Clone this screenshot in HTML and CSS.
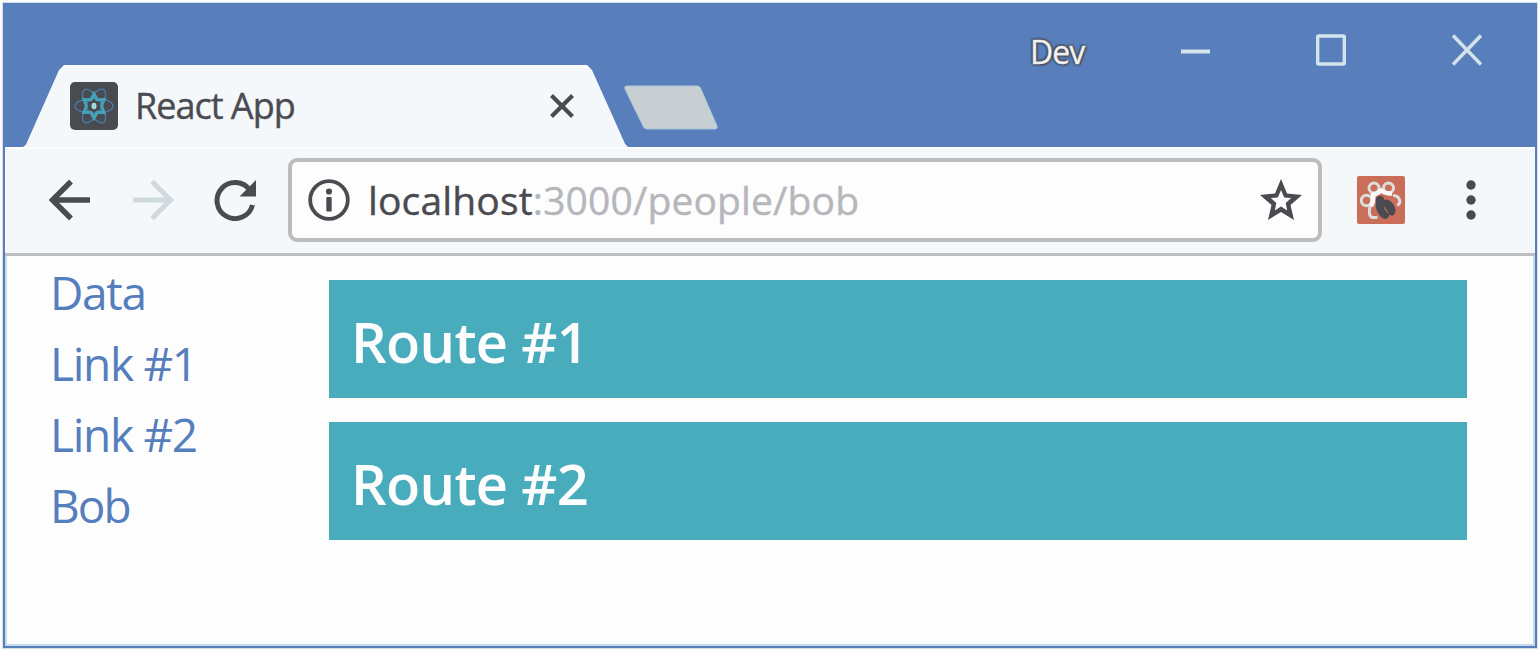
FILE: index.html
```html
<!DOCTYPE html>
<html lang="en">
<head>
<meta charset="utf-8">
<title>React App</title>
<link rel="stylesheet" href="styles.css">
</head>
<body>
<div class="window">
  <header class="titlebar">
    <div class="tab">
      <svg class="favicon" width="48" height="48" viewBox="0 0 48 48">
        <rect width="48" height="48" rx="5" fill="#4a4b51"/>
        <g fill="none" stroke="#467fa9" stroke-width="1.3">
          <ellipse cx="24" cy="24" rx="19" ry="7.5"/>
          <ellipse cx="24" cy="24" rx="19" ry="7.5" transform="rotate(60 24 24)"/>
          <ellipse cx="24" cy="24" rx="19" ry="7.5" transform="rotate(120 24 24)"/>
        </g>
        <path d="M24 12l3 6 7-.5-2.500 6.500 2.500 6.500-7-.5-3 6-3-6-7 .5 2.500-6.500-2.500-6.500 7 .5z" fill="none" stroke="#45a2b8" stroke-width="3"/>
        <circle cx="24" cy="24" r="5.6" fill="#4a4b51"/>
        <ellipse cx="24" cy="24" rx="2.5" ry="3.2" fill="#9edbe4"/>
      </svg>
      <span class="tab-title">React App</span>
      <svg class="tab-close" width="26" height="26" viewBox="0 0 26 26"><path d="M2.5 2.5l21 21M23.5 2.5l-21 21" stroke="#4a4b51" stroke-width="4.2"/></svg>
    </div>
    <svg class="new-tab" width="94" height="45" viewBox="0 0 94 45"><path d="M2.500 1H73Q75.500 1 76.500 3L93 41Q94 44 91 44H23Q20.500 44 19.500 42L1 4Q0 1 2.500 1z" fill="#c8cfd3" stroke="#a9c8da" stroke-width="1"/></svg>
    <div class="controls">
      <span class="profile">Dev</span>
      <svg class="minimize" width="30" height="32" viewBox="0 0 30 32"><path d="M0 17.500h29" stroke="#d6e5ec" stroke-width="4"/></svg>
      <svg class="maximize" width="30" height="32" viewBox="0 0 30 32"><rect x="1.700" y="2" width="26.600" height="28" rx="1" fill="none" stroke="#d3e5ec" stroke-width="3.400"/></svg>
      <svg class="close" width="30" height="32" viewBox="0 0 30 32"><path d="M1 1.500l28 29M29 1.500l-28 29" stroke="#d3e2ea" stroke-width="3.600"/></svg>
    </div>
  </header>
  <nav class="toolbar">
    <svg class="back" width="43" height="42" viewBox="0 0 43 42"><path d="M42 21H4M23 2.500L4.500 21 23 39.500" fill="none" stroke="#4a4b51" stroke-width="5.400"/></svg>
    <svg class="forward" width="43" height="42" viewBox="0 0 43 42"><path d="M1 21H39M20 2.500L38.500 21 20 39.500" fill="none" stroke="#d0dade" stroke-width="5"/></svg>
    <svg class="reload" width="43" height="42" viewBox="0 0 43 42"><path d="M36 11.500A18 18 0 1 0 38.500 26" fill="none" stroke="#4a4b51" stroke-width="5"/><path d="M42 1V17.500H25.500z" fill="#4a4b51"/></svg>
    <div class="address">
      <svg class="info" width="42" height="42" viewBox="0 0 42 42"><circle cx="21" cy="21" r="18.800" fill="none" stroke="#4a4b51" stroke-width="3.800"/><circle cx="21" cy="12.500" r="3.100" fill="#4a4b51"/><rect x="18.300" y="18" width="5.400" height="14.500" rx="1" fill="#4a4b51"/></svg>
      <span class="url"><span class="host">localhost</span><span class="path">:3000/people/bob</span></span>
      <svg class="star" width="44" height="42" viewBox="0 0 44 42"><path fill-rule="evenodd" d="M22 0l6 14.500L43 16 31.500 26 35 41 22 33 9 41 12.500 26 1 16l15-1.500zM22 11l-3.200 7.500-7 .5 5.500 5-1.500 7.500 6.200-4 6.200 4-1.500-7.500 5.500-5-7-.5z" fill="#4a4b51"/></svg>
    </div>
    <svg class="extension" width="48" height="48" viewBox="0 0 48 48">
      <rect width="48" height="48" rx="2" fill="#ca6e5a"/>
      <g fill="none" stroke="#dcdede" stroke-width="3">
        <circle cx="17" cy="12" r="5"/><circle cx="31.500" cy="12" r="5"/>
        <circle cx="9.500" cy="24.500" r="5.200"/>
        <path d="M36 19.500q6 0 7 6-.5 3-3 3.500M13.500 29c-2 6-1.500 12 2 12.500h5"/>
        <path d="M14 30Q17 25 16 19 20 18 24 14.500 29 18 35 17.500" stroke="#fafafa" stroke-width="4.500"/>
      </g>
      <g fill="#4a4b51"><circle cx="23" cy="24" r="4.300"/><ellipse cx="25.500" cy="33" rx="5.800" ry="10.500" transform="rotate(-24 25.500 33)"/><ellipse cx="32" cy="31.500" rx="5.400" ry="8.800" transform="rotate(-32 32 31.500)"/></g>
      <path d="M27 31l4 6" stroke="#ca6e5a" stroke-width="1.200"/>
    </svg>
    <svg class="menu" width="12" height="42" viewBox="0 0 12 42"><g fill="#4a4b51"><circle cx="6" cy="6" r="4.700"/><circle cx="6" cy="21" r="4.700"/><circle cx="6" cy="36" r="4.700"/></g></svg>
  </nav>
  <main class="page">
    <div class="links">
      <a class="link data">Data</a>
      <a class="link">Link #1</a>
      <a class="link">Link #2</a>
      <a class="link bob">Bob</a>
    </div>
    <div class="routes">
      <section class="route">Route #1</section>
      <section class="route">Route #2</section>
    </div>
  </main>
</div>
</body>
</html>
```
FILE: styles.css
```css
* { box-sizing: border-box; }
body {
  margin: 0;
  padding: 3px;
  background: #fdfdfd;
  font-family: "Open Sans", "Noto Sans", sans-serif;
}
svg { display: block; flex: none; }
.window {
  display: flex;
  flex-direction: column;
  width: 1534px;
  height: 645px;
  border: 2px solid #587ebb;
  border-top: 0;
  background: #fdfdfd;
  box-shadow: 0 0 0 1px #d3e0e8, inset 0 0 0 2px #c4dce7;
}
.titlebar {
  display: flex;
  align-items: flex-start;
  height: 144px;
  flex: none;
  background: #587ebb;
}
.tab {
  display: flex;
  align-items: center;
  width: 605px;
  height: 82px;
  margin: 62px 0 0 18px;
  padding-left: 47px;
  background: linear-gradient(#fdfdfd 3px, #f4f8fa 3px);
  clip-path: polygon(0 100%, 3px 97%, 36px 6%, 41px 0, 564px 0, 569px 6%, 602px 96%, 605px 100%);
}
.tab-title {
  width: 200px;
  margin-left: 17px;
  font-size: 36px;
  letter-spacing: -1px;
  line-height: 48px;
  color: #4a4b51;
  white-space: nowrap;
  -webkit-text-stroke: 0.4px #4a4b51;
}
.tab-close { margin-left: 214px; }
.new-tab { margin: 82px 0 0 -4px; }
.controls { display: flex; align-items: flex-start; margin-left: auto; padding: 31px 53px 0 0; }
.profile {
  width: 151px;
  margin-top: 1px;
  font-size: 32px;
  line-height: 34px;
  letter-spacing: -1px;
  color: #f1f3f3;
  -webkit-text-stroke: 0.4px #e3e6e8;
  text-shadow: 0 0 2px #4a4b51, 0 0 2px #4a4b51, 1px 1px 2px #4a4b51, -1px -1px 2px #4a4b51, 0 0 3px #4a4b51, 0 0 3px #4a4b51;
}
.maximize { margin-left: 105px; }
.close { margin-left: 106px; }
.toolbar {
  display: flex;
  align-items: center;
  height: 109px;
  flex: none;
  padding: 0 0 2px 43px;
  background: #f4f8fa;
  border-top: 2px solid #fdfdfd;
  border-bottom: 3px solid #bebebf;
}
.forward { margin-left: 41px; }
.reload { margin-left: 39px; }
.address {
  display: flex;
  align-items: center;
  width: 1034px;
  height: 84px;
  margin-left: 31px;
  padding: 0 15px 0 16px;
  border: 4px solid #bdbcbc;
  border-radius: 9px;
  background: #fdfdfd;
}
.url { margin-left: 18px; font-size: 39px; line-height: 50px; letter-spacing: 0.15px; white-space: nowrap; }
.host { color: #4a4b51; -webkit-text-stroke: 0.4px #4a4b51; }
.path { color: #b5b7bb; -webkit-text-stroke: 0.4px #b5b7bb; }
.star { margin-left: auto; }
.extension { margin-left: 35px; }
.menu { margin-left: 60px; }
.page { display: flex; flex: 1; padding: 0 68px 0 45px; }
.links { display: flex; flex-direction: column; width: 279px; padding-top: 1px; }
.link { font-size: 46px; line-height: 71px; color: #557ebc; letter-spacing: -1.3px; white-space: nowrap; }
.link.bob { letter-spacing: -2px; }
.routes { display: flex; flex-direction: column; flex: 1; gap: 24px; padding-top: 24px; }
.route {
  height: 118px;
  padding: 2px 0 0 22px;
  background: #48acbd;
  color: #fdfdfd;
  font-size: 56px;
  font-weight: 600;
  line-height: 118px;
  letter-spacing: -0.7px;
}
```
